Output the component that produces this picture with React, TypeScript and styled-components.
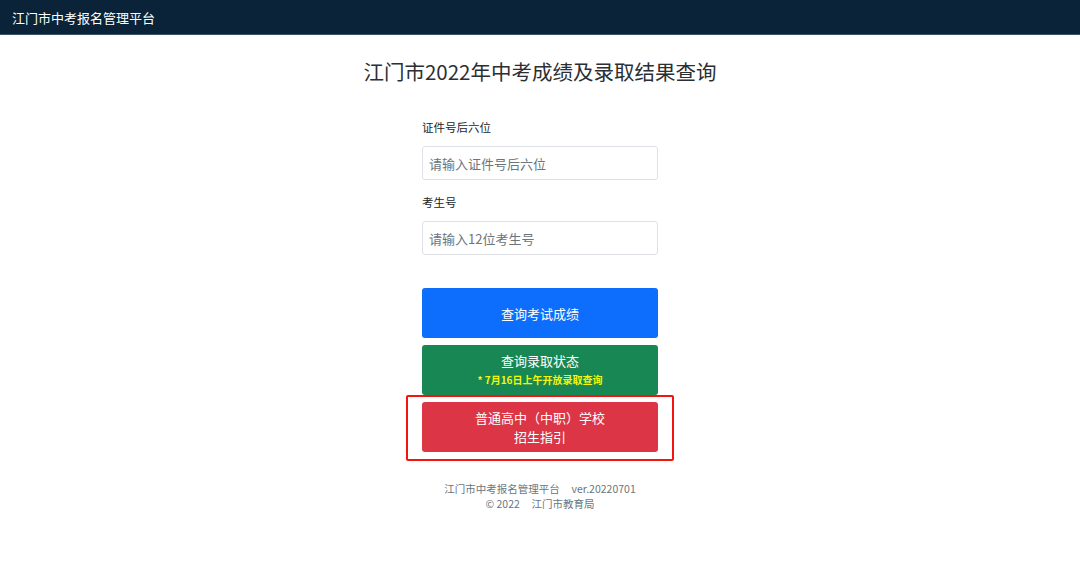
import React from 'react';
import styled, { createGlobalStyle } from 'styled-components';

const GlobalStyle = createGlobalStyle`
    html, body {
        margin: 0;
        padding: 0;
        background: #ffffff;
        font-family: "Noto Sans CJK SC", "Noto Sans", sans-serif;
    }
    * { box-sizing: border-box; }
`;

export default function App() {
    return (<Page>
        <GlobalStyle />
        <TopBar>江门市中考报名管理平台</TopBar>

        <Title>江门市2022年中考成绩及录取结果查询</Title>

        <Form>
            <Field>
                <Label>证件号后六位</Label>
                <Input placeholder="请输入证件号后六位" />
            </Field>
            <Field>
                <Label>考生号</Label>
                <Input placeholder="请输入12位考生号" />
            </Field>

            <Buttons>
                <Button tone="#0d6efd">查询考试成绩</Button>
                <Button tone="#198754">
                    <span>查询录取状态</span>
                    <Note>* 7月16日上午开放录取查询</Note>
                </Button>
                <Marked>
                    <Button tone="#dc3545">
                        <span>普通高中（中职）学校</span>
                        <span>招生指引</span>
                    </Button>
                    <Highlight />
                </Marked>
            </Buttons>
        </Form>

        <Footer>
            <div>江门市中考报名管理平台&nbsp;&nbsp;&nbsp;&nbsp;&nbsp;ver.20220701</div>
            <div>© 2022&nbsp;&nbsp;&nbsp;&nbsp;&nbsp;江门市教育局</div>
        </Footer>
    </Page>);
}

const Page = styled.div`
    width: 1080px;
    height: 566px;
    display: flex;
    flex-direction: column;
    align-items: center;
    overflow: hidden;
`;

const TopBar = styled.div`
    align-self: stretch;
    height: 35px;
    padding: 0 12px;
    display: flex;
    align-items: center;
    background: #0a2339;
    border-bottom: 1px solid #3c5468;
    color: #ffffff;
    font-size: 13px;
`;

const Title = styled.h1`
    margin: 20px 0 0;
    height: 32px;
    line-height: 32px;
    font-size: 20.5px;
    font-weight: 400;
    color: #2b2f33;
`;

const Form = styled.div`
    width: 236px;
    margin-top: 32px;
    display: flex;
    flex-direction: column;
`;

const Field = styled.div`
    display: flex;
    flex-direction: column;
    margin-bottom: 14px;
`;

const Label = styled.label`
    height: 16px;
    line-height: 16px;
    font-size: 11.5px;
    color: #212529;
    margin-bottom: 11px;
`;

const Input = styled.input`
    height: 34px;
    padding: 0 6px;
    border: 1px solid #dee2e6;
    border-radius: 3px;
    font-family: inherit;
    font-size: 13px;
    color: #212529;
    outline: none;
    &::placeholder { color: #6c757d; }
`;

const Buttons = styled.div`
    margin-top: 19px;
    display: flex;
    flex-direction: column;
    gap: 7px;
`;

const Button = styled.button<{ tone: string }>`
    height: 50px;
    width: 100%;
    border: none;
    border-radius: 3px;
    background: ${props => props.tone};
    color: #ffffff;
    font-family: inherit;
    font-size: 13px;
    line-height: 19px;
    display: flex;
    flex-direction: column;
    align-items: center;
    justify-content: center;
    padding: 0;
`;

const Note = styled.span`
    font-size: 10px;
    line-height: 19px;
    font-weight: 600;
    color: #f5f50a;
`;

const Marked = styled.div`
    position: relative;
`;

const Highlight = styled.div`
    position: absolute;
    top: -7px;
    bottom: -9px;
    left: -16px;
    right: -16px;
    border: 2px solid #f2150f;
    border-radius: 2px;
    pointer-events: none;
`;

const Footer = styled.div`
    margin-top: 29px;
    display: flex;
    flex-direction: column;
    align-items: center;
    font-size: 10.5px;
    line-height: 15px;
    color: #6c757d;
`;
